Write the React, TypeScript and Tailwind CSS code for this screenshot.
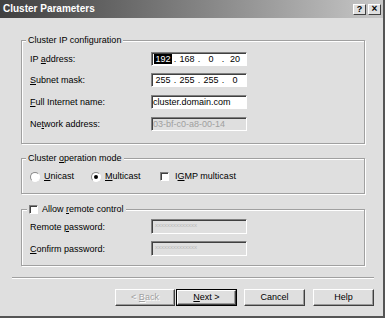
import React from "react";

const BG = "bg-[#dfdfdf]";

function U({ children }: { children: React.ReactNode }) {
  return <span className="underline underline-offset-[1px]">{children}</span>;
}

function Sunken({ className = "", children }: { className?: string; children?: React.ReactNode }) {
  return (
    <div
      className={
        "border border-t-[#808080] border-l-[#808080] border-r-white border-b-white shadow-[inset_1px_1px_0_#404040] " +
        className
      }
    >
      {children}
    </div>
  );
}

function Radio({ checked }: { checked?: boolean }) {
  return (
    <span className="w-[10px] h-[10px] rounded-full bg-white border border-t-[#8a8a8a] border-l-[#8a8a8a] border-r-white border-b-white flex items-center justify-center shrink-0">
      {checked && <span className="w-[4px] h-[4px] rounded-full bg-black" />}
    </span>
  );
}

function Check() {
  return (
    <span className="w-[9px] h-[9px] bg-white border border-t-[#808080] border-l-[#808080] border-r-white border-b-white shadow-[inset_1px_1px_0_#404040] shrink-0" />
  );
}

function Btn({
  children,
  w,
  def,
  disabled,
}: {
  children: React.ReactNode;
  w: string;
  def?: boolean;
  disabled?: boolean;
}) {
  return (
    <div className={(def ? "border border-black " : "") + w + " h-[17px] flex"}>
      <div
        className={
          "flex-1 flex items-center justify-center border border-t-white border-l-white border-r-[#404040] border-b-[#404040] shadow-[inset_-1px_-1px_0_#9a9a9a] " +
          (disabled ? "text-[#a0a0a0] [text-shadow:1px_1px_0_#fff]" : "text-black")
        }
      >
        {children}
      </div>
    </div>
  );
}

function Row({ label, children, className = "" }: { label: React.ReactNode; children: React.ReactNode; className?: string }) {
  return (
    <div className={"flex items-center " + className}>
      <div className="w-[121px] leading-[12px]">{label}</div>
      {children}
    </div>
  );
}

function Seg({ v, sel }: { v: string; sel?: boolean }) {
  return (
    <span className="w-[20px] flex justify-center">
      {sel ? <span className="bg-black text-white px-[1px] leading-[10px]">{v}</span> : <span>{v}</span>}
    </span>
  );
}

function Dot() {
  return <span className="w-[4px] text-center">.</span>;
}

export default function App() {
  return (
    <div
      className={
        "w-[385px] h-[318px] " +
        BG +
        " border-r-2 border-b-2 border-r-[#555] border-b-[#555] font-['Liberation_Sans',Arial,sans-serif] text-[9px] text-black flex flex-col overflow-hidden"
      }
    >
      {/* Title bar */}
      <div className="h-[18px] bg-linear-to-r from-[#404040] to-[#c8c8c8] flex items-center pl-[3px] pr-[2px] shrink-0">
        <span className="text-white font-bold text-[10px] leading-none">Cluster Parameters</span>
        <div className="ml-auto flex gap-[2px]">
          <div className="w-[13px] h-[11px] bg-[#dfdfdf] border border-t-white border-l-white border-r-[#404040] border-b-[#404040] flex items-center justify-center text-[9px] font-bold leading-none">
            ?
          </div>
          <div className="w-[13px] h-[11px] bg-[#dfdfdf] border border-t-white border-l-white border-r-[#404040] border-b-[#404040] flex items-center justify-center text-[10px] font-bold leading-none">
            ×
          </div>
        </div>
      </div>

      {/* Group 1 */}
      <fieldset className="mt-[16px] ml-[21px] w-[344px] border border-[#a0a0a0] shadow-[inset_1px_1px_0_#fff,1px_1px_0_#fff] px-[8px] pb-[12px]">
        <legend className="ml-[-4px] px-[2px] leading-[12px] bg-[#dfdfdf]">Cluster IP configuration</legend>
        <Row label={<>IP <U>a</U>ddress:</>} className="mt-[6px]">
          <Sunken className="w-[96px] h-[14px] bg-white flex items-center pl-[1px] leading-[12px]">
            <Seg v="192" sel />
            <Dot />
            <Seg v="168" />
            <Dot />
            <Seg v="0" />
            <Dot />
            <Seg v="20" />
          </Sunken>
        </Row>
        <Row label={<><U>S</U>ubnet mask:</>} className="mt-[7px]">
          <Sunken className="w-[96px] h-[14px] bg-white flex items-center pl-[1px] leading-[12px]">
            <Seg v="255" />
            <Dot />
            <Seg v="255" />
            <Dot />
            <Seg v="255" />
            <Dot />
            <Seg v="0" />
          </Sunken>
        </Row>
        <Row label={<><U>F</U>ull Internet name:</>} className="mt-[8px]">
          <Sunken className="w-[96px] h-[14px] bg-white flex items-center pl-[1px] leading-[12px]">
            cluster.domain.com
          </Sunken>
        </Row>
        <Row label={<>Ne<U>t</U>work address:</>} className="mt-[8px]">
          <Sunken className="w-[96px] h-[14px] flex items-center pl-[1px] leading-[12px] text-[#a0a0a0]">
            03-bf-c0-a8-00-14
          </Sunken>
        </Row>
      </fieldset>

      {/* Group 2 */}
      <fieldset className="mt-[8px] ml-[21px] w-[344px] border border-[#a0a0a0] shadow-[inset_1px_1px_0_#fff,1px_1px_0_#fff] px-[8px] pb-[10px]">
        <legend className="ml-[-4px] px-[2px] leading-[12px] bg-[#dfdfdf]">
          Cluster <U>o</U>peration mode
        </legend>
        <div className="mt-[6px] h-[13px] flex items-center">
          <Radio />
          <span className="ml-[4px] w-[47px]">
            <U>U</U>nicast
          </span>
          <Radio checked />
          <span className="ml-[4px] w-[55px]">
            <U>M</U>ulticast
          </span>
          <Check />
          <span className="ml-[6px]">
            I<U>G</U>MP multicast
          </span>
        </div>
      </fieldset>

      {/* Group 3 */}
      <fieldset className="mt-[9px] ml-[21px] w-[344px] border border-[#a0a0a0] shadow-[inset_1px_1px_0_#fff,1px_1px_0_#fff] px-[8px] pb-[9px]">
        <legend className="ml-[-3px] px-[2px] h-[12px] leading-[12px] bg-[#dfdfdf] flex items-center">
          <Check />
          <span className="ml-[4px]">
            Allow <U>r</U>emote control
          </span>
        </legend>
        <Row label={<>Remote <U>p</U>assword:</>} className="mt-[4px]">
          <Sunken className="w-[96px] h-[15px] flex items-start pl-[3px] pt-[2px] leading-[6px] text-[6px] text-[#b8b8b8]">
            xxxxxxxxxxxxxx
          </Sunken>
        </Row>
        <Row label={<><U>C</U>onfirm password:</>} className="mt-[7px]">
          <Sunken className="w-[96px] h-[15px] flex items-start pl-[3px] pt-[2px] leading-[6px] text-[6px] text-[#b8b8b8]">
            xxxxxxxxxxxxxx
          </Sunken>
        </Row>
      </fieldset>

      {/* Separator */}
      <div className="mt-[11px] ml-[12px] w-[362px] h-[2px] border-t border-t-[#a0a0a0] border-b border-b-white" />

      {/* Buttons */}
      <div className="mt-[10px] flex justify-end pr-[9px]">
        <Btn w="w-[60px]" disabled>
          &lt;&nbsp;<U>B</U>ack
        </Btn>
        <div className="w-[1px]" />
        <Btn w="w-[61px]" def>
          <U>N</U>ext&nbsp;&gt;
        </Btn>
        <div className="w-[7px]" />
        <Btn w="w-[61px]">Cancel</Btn>
        <div className="w-[8px]" />
        <Btn w="w-[61px]">Help</Btn>
      </div>
    </div>
  );
}
